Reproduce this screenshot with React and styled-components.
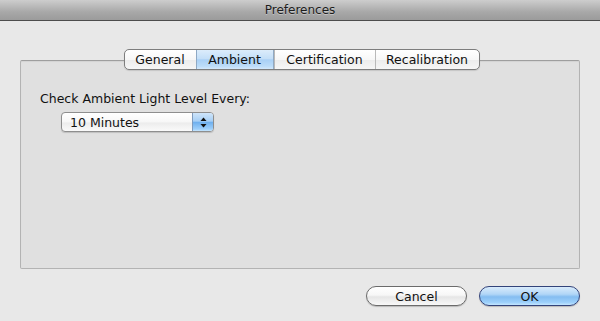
import React from "react";
import styled, { createGlobalStyle, css } from "styled-components";

const GlobalStyle = createGlobalStyle`
  html, body { margin: 0; padding: 0; }
  body {
    background: #e8e8e8;
    font-family: "DejaVu Sans", "Liberation Sans", Arial, sans-serif;
    font-size: 12.5px;
    color: #000;
  }
`;

const Window = styled.div`
  width: 600px;
  height: 321px;
  display: flex;
  flex-direction: column;
  background: #e8e8e8;
  overflow: hidden;
`;

const TitleBar = styled.div`
  height: 20px;
  flex: none;
  border-bottom: 1px solid #4d4d4d;
  background: linear-gradient(#cdcdcd, #a8a8a8 60%, #9b9b9b);
  display: flex;
  align-items: center;
  justify-content: center;
  font-size: 12px;
  color: #1c1c1c;
  text-shadow: 0 1px 0 rgba(255,255,255,0.35);
`;

const Content = styled.div`
  padding: 28px 20px 0 20px;
  display: flex;
  flex-direction: column;
`;

const TabRow = styled.div`
  display: flex;
  justify-content: center;
  position: relative;
  z-index: 1;
  padding-left: 3px;
`;

const TabGroup = styled.div`
  display: flex;
  height: 19px;
  border: 1px solid #7d7d7d;
  border-radius: 5px;
  overflow: hidden;
  background: linear-gradient(#ffffff, #f7f7f7 50%, #ececec 51%, #f6f6f6);
  box-shadow: 0 1px 1px rgba(0,0,0,0.12);
`;

const Tab = styled.div`
  display: flex;
  align-items: center;
  justify-content: center;
  width: ${(p) => p.$w}px;
  font-size: 12.5px;
  color: #111;
  border-left: ${(p) => (p.$first ? "none" : "1px solid #b9b9b9")};
  box-sizing: border-box;
  ${(p) =>
    p.$active &&
    css`
      background: linear-gradient(#dcecfb, #c4dff8 45%, #a9d0f5 52%, #bcdcf8 85%, #d3e9fc);
      border-left-color: #8fa9c4;
      border-right: 1px solid #8fa9c4;
    `}
`;

const Panel = styled.div`
  margin-top: -10px;
  height: 209px;
  box-sizing: border-box;
  border: 1px solid #b3b3b3;
  border-top-color: #9e9e9e;
  border-radius: 2px;
  background: #e0e0e0;
  padding: 30px 0 0 19px;
  box-shadow: inset 0 1px 1px rgba(0,0,0,0.06);
`;

const Label = styled.div`
  font-size: 12.5px;
  line-height: 16px;
  color: #111;
`;

const Popup = styled.div`
  margin: 5px 0 0 21px;
  width: 151px;
  height: 18px;
  border: 1px solid #8e8e8e;
  border-radius: 4px;
  display: flex;
  overflow: hidden;
  background: linear-gradient(#ffffff, #f7f7f7 50%, #ececec 55%, #fafafa);
  box-shadow: 0 1px 1px rgba(0,0,0,0.15);
`;

const PopupText = styled.div`
  flex: 1;
  display: flex;
  align-items: center;
  padding-left: 8px;
  font-size: 12.5px;
  color: #111;
`;

const Stepper = styled.div`
  width: 20px;
  border-left: 1px solid #7f9bbd;
  background: linear-gradient(#cfe5fa, #a7cff5 45%, #6fb0ee 52%, #9fd0fb 90%, #c7e6fd);
  display: flex;
  align-items: center;
  justify-content: center;
`;

const ButtonRow = styled.div`
  display: flex;
  justify-content: flex-end;
  gap: 12px;
  margin-top: 17px;
`;

const Button = styled.div`
  width: 99px;
  height: 18px;
  border-radius: 10px;
  display: flex;
  align-items: center;
  justify-content: center;
  font-size: 12.5px;
  color: #111;
  border: 1px solid ${(p) => (p.$primary ? "#33437a" : "#6b6b6b")};
  background: ${(p) =>
    p.$primary
      ? "linear-gradient(#d9ebfb, #b1d6f7 40%, #84bdf1 55%, #9cd0fb 85%, #c4e6ff)"
      : "linear-gradient(#ffffff, #f7f7f7 45%, #e6e6e6 55%, #f8f8f8)"};
  box-shadow: 0 1px 1px rgba(0,0,0,0.2);
`;

const tabs = [
  { label: "General", w: 71 },
  { label: "Ambient", w: 78, active: true },
  { label: "Certification", w: 101 },
  { label: "Recalibration", w: 104 },
];

export default function App() {
  return (
    <>
      <GlobalStyle />
      <Window>
        <TitleBar>Preferences</TitleBar>
        <Content>
          <TabRow>
            <TabGroup>
              {tabs.map((t, i) => (
                <Tab key={t.label} $w={t.w} $first={i === 0} $active={t.active}>
                  {t.label}
                </Tab>
              ))}
            </TabGroup>
          </TabRow>
          <Panel>
            <Label>Check Ambient Light Level Every:</Label>
            <Popup>
              <PopupText>10 Minutes</PopupText>
              <Stepper>
                <svg width="7" height="11" viewBox="0 0 7 11">
                  <path d="M3.5 0.5 L6.5 4 L0.5 4 Z" fill="#111" />
                  <path d="M0.5 7 L6.5 7 L3.5 10.5 Z" fill="#111" />
                </svg>
              </Stepper>
            </Popup>
          </Panel>
          <ButtonRow>
            <Button>Cancel</Button>
            <Button $primary>OK</Button>
          </ButtonRow>
        </Content>
      </Window>
    </>
  );
}
